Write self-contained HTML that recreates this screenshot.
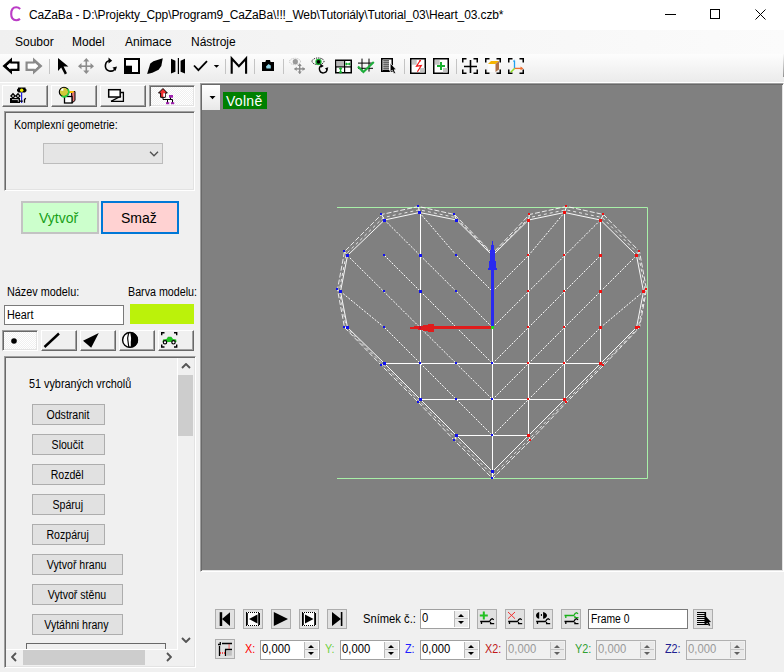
<!DOCTYPE html>
<html><head><meta charset="utf-8">
<style>
*{box-sizing:border-box;margin:0;padding:0}
html,body{width:784px;height:672px;overflow:hidden;background:#f0f0f0;font-family:"Liberation Sans",sans-serif;font-size:12px;color:#000}
.a{position:absolute}
.t{position:absolute;white-space:nowrap;line-height:1}
.s11{font-size:12.3px;transform:scaleX(0.88);transform-origin:0 0}
.raised{position:absolute;background:#f0f0f0;border-top:1px solid #fff;border-left:1px solid #fff;border-right:1px solid #696969;border-bottom:1px solid #696969;box-shadow:inset -1px -1px 0 #a0a0a0}
.sunken{position:absolute;border-top:1px solid #a0a0a0;border-left:1px solid #a0a0a0;border-right:1px solid #fff;border-bottom:1px solid #fff;box-shadow:inset 1px 1px 0 #696969,inset -1px -1px 0 #e3e3e3}
.dith{background-color:#fff;background-image:linear-gradient(45deg,#f0f0f0 25%,transparent 25%,transparent 75%,#f0f0f0 75%),linear-gradient(45deg,#f0f0f0 25%,transparent 25%,transparent 75%,#f0f0f0 75%);background-size:2px 2px;background-position:0 0,1px 1px}
.wbtn{position:absolute;background:#e1e1e1;border:1px solid #adadad}
.lbtn{position:absolute;background:#e1e1e1;border:1px solid #adadad;font-size:12.3px;text-align:center;line-height:21px;white-space:nowrap;padding-right:2px}
.lbtn span{display:inline-block;transform:scaleX(0.86)}
.inp{position:absolute;background:#fff;border:1px solid #7a7a7a}
.spin{position:absolute;background:#fff;border:1px solid #a0a0a0}
.spin .bt{position:absolute;right:1px;top:1px;width:14px;height:16px;background:#ececec;border-left:1px solid #b9b9b9}
.spin .bt:before{content:"";position:absolute;left:3px;top:3px;border-left:3px solid transparent;border-right:3px solid transparent;border-bottom:3px solid #000}
.spin .bt:after{content:"";position:absolute;left:3px;top:10px;border-left:3px solid transparent;border-right:3px solid transparent;border-top:3px solid #000}
.spin .mid{position:absolute;right:1px;top:8px;width:14px;height:1px;background:#c4c4c4}
.spin .v{position:absolute;left:1px;top:2px;font-size:12.5px;line-height:1;white-space:nowrap;transform:scaleX(0.9);transform-origin:0 0}
.dis{background:#f0f0f0;border-color:#b0b0b0}
.dis .v{color:#9a9a9a}
.dis .bt{background:#e9e9e9;border-left-color:#c8c8c8}
.dis .bt:before{border-bottom-color:#606060}
.dis .bt:after{border-top-color:#606060}
</style></head><body>
<!-- title bar -->
<div class="a" style="left:0;top:0;width:784px;height:30px;background:#fff"></div>
<svg class="a" style="left:0;top:0" width="30" height="30"><path d="M20.2,8.9 C19,7.8 17.8,7.3 16.2,7.3 C13,7.3 11.2,10.2 11.2,14.1 C11.2,18 13,20.3 16.2,20.3 C17.7,20.3 18.9,19.8 20,18.9" fill="none" stroke="#bb3cc6" stroke-width="2.1"/></svg>
<div class="t" style="left:29px;top:9px;font-size:12px;letter-spacing:-0.12px">CaZaBa - D:\Projekty_Cpp\Program9_CaZaBa\!!!_Web\Tutoriály\Tutorial_03\Heart_03.czb*</div>
<div class="a" style="left:665px;top:14px;width:11px;height:1px;background:#000"></div>
<div class="a" style="left:710px;top:9px;width:10px;height:10px;border:1px solid #000"></div>
<svg class="a" style="left:755px;top:9px" width="11" height="11"><path d="M0.5 0.5L10.5 10.5M10.5 0.5L0.5 10.5" stroke="#000" stroke-width="1"/></svg>
<!-- menu bar -->
<div class="a" style="left:0;top:30px;width:784px;height:24px;background:linear-gradient(to right,#f0f0f0,#fbfbfb)"></div>
<div class="t" style="left:15px;top:36px">Soubor</div>
<div class="t" style="left:72px;top:36px">Model</div>
<div class="t" style="left:125px;top:36px">Animace</div>
<div class="t" style="left:191px;top:36px">Nástroje</div>
<!-- toolbar -->
<div class="a" style="left:0;top:54px;width:784px;height:28px;background:linear-gradient(#fdfdfd,#ebebeb)"></div>
<div class="a" style="left:0;top:82px;width:784px;height:1px;background:#fff"></div>
<div class="a" style="left:783px;top:54px;width:1px;height:23px;background:linear-gradient(#f8f8f8,#909090)"></div>
<svg class="a" style="left:0;top:0" width="784" height="84">
<!-- back arrow -->
<path d="M2.5,66 L12,57.5 L12,61.5 L19.5,61.5 L19.5,71 L12,71 L12,74.5Z M6.8,66 L10.2,62.9 L10.2,63.8 L17.2,63.8 L17.2,68.6 L10.2,68.6 L10.2,69.3Z" fill="#000" fill-rule="evenodd"/>
<path d="M6.8,66 L10.2,62.9 L10.2,63.8 L17.2,63.8 L17.2,68.6 L10.2,68.6 L10.2,69.3Z" fill="#fff"/>
<!-- forward arrow gray -->
<path d="M42.5,66 L33,57.5 L33,61.5 L25.5,61.5 L25.5,71 L33,71 L33,74.5Z M38.2,66 L34.8,62.9 L34.8,63.8 L27.8,63.8 L27.8,68.6 L34.8,68.6 L34.8,69.3Z" fill="#8a8a8a" fill-rule="evenodd"/>
<path d="M38.2,66 L34.8,62.9 L34.8,63.8 L27.8,63.8 L27.8,68.6 L34.8,68.6 L34.8,69.3Z" fill="#fff"/>
<rect x="49" y="59" width="1" height="15" fill="#c4c4c4"/>
<!-- cursor -->
<path d="M58,58 L58,71 L61.2,67.6 L64.8,74.5 L67,73.3 L63.6,66.6 L68.4,66.4 Z" fill="#000"/>
<!-- move cross gray -->
<g fill="#8c8c8c">
<rect x="85.5" y="60" width="1.6" height="12"/><rect x="80" y="65.4" width="12" height="1.6"/>
<path d="M86.3,58 L83.2,61.5 L89.4,61.5Z M86.3,74 L83.2,70.5 L89.4,70.5Z M78,66.2 L81.5,63.1 L81.5,69.3Z M94,66.2 L90.5,63.1 L90.5,69.3Z"/>
</g>
<!-- rotate -->
<path d="M110.5,60.5 A5.3,5.3 0 1 0 115.5,68" fill="none" stroke="#000" stroke-width="1.6"/>
<path d="M108.5,57.5 L112.2,60.8 L108.5,63.5Z" fill="#000"/>
<path d="M112.5,67.5 L117,66.5 L115.5,71Z" fill="#000"/>
<!-- scale square -->
<rect x="125" y="59" width="14" height="14" fill="#fff" stroke="#000" stroke-width="2"/>
<rect x="124" y="65.7" width="8" height="8.3" fill="#000"/>
<!-- leaf -->
<path d="M147.1,73.9 L150.3,63.4 L153.4,61.3 L162.8,58.2 L161.3,66 L158.6,69.7 L152.4,72.8Z" fill="#000"/>
<!-- mirror -->
<path d="M171,58.7 L175.4,60.8 L175.4,71.8 L171,73.4Z M185,58.7 L180.6,60.8 L180.6,71.8 L185,73.4Z" fill="#000"/>
<rect x="177.8" y="58" width="1.2" height="16" fill="#000"/>
<!-- check -->
<path d="M194,65.5 L198.4,70.2 L207,61.1" fill="none" stroke="#000" stroke-width="1.8"/>
<path d="M213.8,65 L219.2,65 L216.5,67.8Z" fill="#000"/>
<rect x="225" y="59" width="1" height="15" fill="#c4c4c4"/>
<!-- M -->
<path d="M231.7,73.8 L231.7,58.5 L238.9,66.1 L246.1,58.5 L246.1,73.8" fill="none" stroke="#000" stroke-width="2.1" stroke-linejoin="miter"/>
<rect x="254" y="59" width="1" height="15" fill="#c4c4c4"/>
<!-- camera -->
<path d="M262,62 L265.4,62 L266,60 L270,60 L270.6,62 L274,62 L274,71 L262,71Z" fill="#000"/>
<path d="M266,66.5 L268.5,64 L270.8,65.5 L270.8,68.6 L266.5,68.6Z" fill="#8fd4e6"/>
<rect x="283" y="59" width="1" height="15" fill="#c4c4c4"/>
<!-- gray eye + move -->
<ellipse cx="295" cy="61.5" rx="5.5" ry="3.2" fill="none" stroke="#b8b8b8" stroke-width="1" stroke-dasharray="1 1"/>
<circle cx="295.3" cy="61.7" r="2.6" fill="#9a9a9a"/>
<g fill="#8c8c8c">
<rect x="299" y="64" width="1.4" height="9.5"/><rect x="294.5" y="68.2" width="10.4" height="1.4"/>
<path d="M299.7,63.5 L297.6,66 L301.8,66Z M299.7,74 L297.6,71.5 L301.8,71.5Z M294.2,68.9 L296.7,66.8 L296.7,71Z M305,68.9 L302.5,66.8 L302.5,71Z"/>
</g>
<!-- eye + rotate -->
<ellipse cx="318" cy="61.3" rx="6" ry="3.3" fill="none" stroke="#000" stroke-width="1" stroke-dasharray="1.2 1"/>
<circle cx="318.5" cy="61.8" r="2.5" fill="#000" stroke="#18b030" stroke-width="1.3"/>
<path d="M322,65.5 A3.8,3.8 0 1 0 327,69" fill="none" stroke="#000" stroke-width="1.4"/>
<path d="M320.5,63.8 L323.8,66 L320.8,67.8Z M325,68.3 L328.3,67.2 L327.2,70.8Z" fill="#000"/>
<!-- grid box -->
<rect x="335.75" y="60.25" width="15.5" height="12.5" fill="#fff" stroke="#000" stroke-width="1.5"/>
<rect x="336.5" y="61" width="7.5" height="5.5" fill="#b8b8b8"/>
<rect x="344" y="60.5" width="1.2" height="12" fill="#000"/>
<rect x="335.5" y="66.3" width="16" height="1.2" fill="#000"/>
<path d="M340.6,67.8 L340.6,73 M339.2,69.2 L340.6,67.8 L342,69.2 M339.2,71.6 L340.6,73 L342,71.6" stroke="#18b030" stroke-width="1.2" fill="none"/>
<path d="M345.8,64 L350,64 M347,62.8 L345.8,64 L347,65.2 M348.8,62.8 L350,64 L348.8,65.2" stroke="#18b030" stroke-width="1.2" fill="none"/>
<!-- hash + check -->
<g stroke="#000" stroke-width="1">
<path d="M362,58.6 L362,71.6 M369,58.6 L369,71.6 M358,63.1 L373,63.1 M358,68.3 L373,68.3"/>
</g>
<path d="M358,66.4 L363.4,72 L373.8,62" fill="none" stroke="#1eae3c" stroke-width="2.1"/>
<!-- document -->
<rect x="381.75" y="58.75" width="10.5" height="12.5" fill="#fff" stroke="#000" stroke-width="1.5"/>
<path d="M383.2,60.9 L389,60.9 M383.2,62.9 L389,62.9 M383.2,64.9 L389,64.9 M383.2,66.9 L389,66.9 M383.2,68.9 L389,68.9" stroke="#000" stroke-width="1"/>
<rect x="383" y="70" width="6" height="1.5" fill="#000"/>
<path d="M390.2,63 L390.2,71.8 L392.3,70.2 L393.8,73.8 L395.6,73.2 L394.2,69.8 L396.2,69.6Z" fill="#000" stroke="#fff" stroke-width="0.7"/>
<rect x="404" y="59" width="1" height="15" fill="#c4c4c4"/>
<!-- lightning box -->
<rect x="410.75" y="58.75" width="14.5" height="14.5" fill="#fff" stroke="#000" stroke-width="1.5"/>
<rect x="412" y="60" width="4.7" height="4.7" fill="#c4c4c4"/><rect x="420" y="68" width="4.7" height="4.5" fill="#c4c4c4"/>
<path d="M420.2,60.5 L416.5,66.2 L421.3,65.6 L417.4,71.8" fill="none" stroke="#f01818" stroke-width="1.2"/>
<circle cx="420.2" cy="60.6" r="0.9" fill="#f01818"/>
<!-- plus box -->
<rect x="433.75" y="58.75" width="14.5" height="14.5" fill="#fff" stroke="#000" stroke-width="1.5"/>
<rect x="435" y="60" width="4.7" height="4.7" fill="#c4c4c4"/><rect x="443" y="68" width="4.7" height="4.5" fill="#c4c4c4"/>
<rect x="440" y="62" width="2" height="8" fill="#18b030"/><rect x="437" y="65" width="8" height="2" fill="#18b030"/>
<rect x="456" y="59" width="1" height="15" fill="#c4c4c4"/>
<!-- bracket icons -->
<g fill="none" stroke="#000" stroke-width="1.5">
<path d="M462.75,62.5 L462.75,58.75 L466.5,58.75 M473.5,58.75 L477.25,58.75 L477.25,62.5 M477.25,69.5 L477.25,73.25 L473.5,73.25 M466.5,73.25 L462.75,73.25 L462.75,69.5"/>
<path d="M485.75,62.5 L485.75,58.75 L489.5,58.75 M496.5,58.75 L500.25,58.75 L500.25,62.5 M500.25,69.5 L500.25,73.25 L496.5,73.25 M489.5,73.25 L485.75,73.25 L485.75,69.5"/>
<path d="M508.75,62.5 L508.75,58.75 L512.5,58.75 M519.5,58.75 L523.25,58.75 L523.25,62.5 M523.25,69.5 L523.25,73.25 L519.5,73.25 M512.5,73.25 L508.75,73.25 L508.75,69.5"/>
</g>
<path d="M464,66.5 L477,66.5 M470.5,60 L470.5,73" stroke="#000" stroke-width="1.6"/>
<path d="M488,64 L491,61 L499,61 L495.5,64Z" fill="#f5b400"/>
<path d="M488,64 L495.5,64 L495.5,72 L488,72Z" fill="#fcfcfc"/>
<path d="M495.5,64 L499,61 L499,69.5 L495.5,72Z" fill="#b07048"/>
<path d="M514.5,60.5 L514.5,68.4" stroke="#20a0f0" stroke-width="1.3"/>
<path d="M513,61.5 L514.5,60.2" stroke="#20a0f0" stroke-width="1"/>
<path d="M514.5,68.4 L522,68.4" stroke="#f07030" stroke-width="1.3"/>
<path d="M520.5,66.5 L523.5,68.4 L520.5,70.3Z" fill="#f07030"/>
<path d="M514.5,68.4 L510.8,72.2" stroke="#90e020" stroke-width="1.5"/>
</svg>


<!-- left panel -->
<div class="raised" style="left:2px;top:85px;width:46px;height:22px"></div>
<div class="raised" style="left:51px;top:85px;width:46px;height:22px"></div>
<div class="raised" style="left:100px;top:85px;width:46px;height:22px"></div>
<div class="sunken dith" style="left:149px;top:85px;width:46px;height:22px"></div>

<div class="sunken" style="left:4px;top:111px;width:191px;height:80px"></div>
<div class="t s11" style="left:14px;top:119px;transform:scaleX(0.867)">Komplexní geometrie:</div>
<div class="a" style="left:43px;top:143px;width:120px;height:21px;background:#e5e5e5;border:1px solid #bcbcbc"></div>
<svg class="a" style="left:149px;top:151px" width="11" height="6"><path d="M1,0.8 L5,4.8 L9,0.8" fill="none" stroke="#505050" stroke-width="1.3"/></svg>

<div class="a" style="left:21px;top:201px;width:78px;height:33px;background:#ccffcc;border:2px solid #c3c3c3"></div>
<div class="t" style="left:39px;top:211px;font-size:14px;color:#18a018">Vytvoř</div>
<div class="a" style="left:101px;top:201px;width:78px;height:33px;background:#ffd2d2;border:2px solid #0078d7"></div>
<div class="t" style="left:121px;top:211px;font-size:14px">Smaž</div>

<div class="t s11" style="left:7px;top:286px">Název modelu:</div>
<div class="t s11" style="left:128px;top:286px;transform:scaleX(0.87)">Barva modelu:</div>
<div class="inp" style="left:4px;top:305px;width:120px;height:20px"></div>
<div class="t s11" style="left:7px;top:309px">Heart</div>
<div class="a" style="left:130px;top:304px;width:64px;height:20px;background:#bbf20a"></div>

<div class="sunken dith" style="left:2px;top:330px;width:36px;height:21px"></div>
<div class="raised" style="left:41px;top:330px;width:36px;height:21px"></div>
<div class="raised" style="left:80px;top:330px;width:36px;height:21px"></div>
<div class="raised" style="left:119px;top:330px;width:36px;height:21px"></div>
<div class="raised" style="left:158px;top:330px;width:36px;height:21px"></div>

<div class="sunken" style="left:4px;top:356px;width:192px;height:312px"></div>
<div class="t s11" style="left:29px;top:378px">51 vybraných vrcholů</div>
<div class="lbtn" style="left:32px;top:404px;width:73px;height:21px"><span>Odstranit</span></div>
<div class="lbtn" style="left:32px;top:434px;width:73px;height:21px"><span>Sloučit</span></div>
<div class="lbtn" style="left:32px;top:464px;width:73px;height:21px"><span>Rozděl</span></div>
<div class="lbtn" style="left:32px;top:494px;width:73px;height:21px"><span>Spáruj</span></div>
<div class="lbtn" style="left:32px;top:524px;width:73px;height:21px"><span>Rozpáruj</span></div>
<div class="lbtn" style="left:32px;top:554px;width:91px;height:21px"><span>Vytvoř hranu</span></div>
<div class="lbtn" style="left:32px;top:584px;width:91px;height:21px"><span>Vytvoř stěnu</span></div>
<div class="lbtn" style="left:32px;top:614px;width:91px;height:21px"><span>Vytáhni hrany</span></div>
<div class="a" style="left:26px;top:643px;width:140px;height:6px;border:1px solid #696969;border-bottom:none"></div>
<!-- vertical scrollbar -->
<div class="a" style="left:178px;top:358px;width:16px;height:291px;background:#f0f0f0"></div>
<div class="a" style="left:178px;top:375px;width:15px;height:61px;background:#cdcdcd"></div>
<svg class="a" style="left:181px;top:363px" width="10" height="6"><path d="M1,5 L5,1 L9,5" fill="none" stroke="#555" stroke-width="1.9"/></svg>
<svg class="a" style="left:181px;top:637px" width="10" height="6"><path d="M1,1 L5,5 L9,1" fill="none" stroke="#555" stroke-width="1.9"/></svg>
<!-- horizontal scrollbar -->
<div class="a" style="left:6px;top:649px;width:171px;height:16px;background:#f0f0f0"></div>
<div class="a" style="left:23px;top:650px;width:122px;height:15px;background:#cdcdcd"></div>
<svg class="a" style="left:11px;top:652px" width="6" height="10"><path d="M5,1 L1,5 L5,9" fill="none" stroke="#555" stroke-width="1.9"/></svg>
<svg class="a" style="left:166px;top:652px" width="6" height="10"><path d="M1,1 L5,5 L1,9" fill="none" stroke="#555" stroke-width="1.9"/></svg>
<div class="a" style="left:177px;top:358px;width:1px;height:292px;background:#fff"></div>
<div class="a" style="left:6px;top:649px;width:172px;height:1px;background:#fff"></div>
<svg class="a" style="left:0;top:0" width="200" height="360">
<!-- tab1: camera + light -->
<path d="M18,87.5 L25.5,87.5 L25.5,88.5 L26.5,89.5 L26.5,91 L25,92.5 L18.5,92.5 L17,91 L17,89.5 L18,88.5Z" fill="#000"/>
<circle cx="21.7" cy="90.2" r="1.7" fill="#f0f000"/>
<rect x="21" y="92.5" width="1.2" height="10.5" fill="#2020e0"/>
<path d="M10,98 L20,98 L20,103 L10,103Z" fill="#000"/>
<path d="M12,99.6 L18.3,99.6 L18.3,101.8" fill="none" stroke="#d8d8d8" stroke-width="0.9"/>
<path d="M10,96 L13,92.8 L16,96 L13,98.8Z M15,96 L18,92.8 L20.8,96 L18,98.8Z" fill="#000"/>
<path d="M11.8,96 L13,94.7 L14.2,96 L13,97.2Z M16.8,96 L18,94.7 L19.2,96 L18,97.2Z" fill="#d0d0d0"/>
<rect x="20" y="100.5" width="2.8" height="1.3" fill="#000"/>
<path d="M24.5,102.8 L24.5,99.5 L25.8,98.2" stroke="#000" stroke-width="1.3" fill="none"/>
<!-- tab2: sphere + cube -->
<path d="M71.5,91.5 L75,91.5 L75,100.5 L72,103Z" fill="#e87878" stroke="#000" stroke-width="1"/>
<path d="M68,93 L70,91 L74.5,91 L72.5,93Z" fill="#ffc000"/>
<rect x="64.5" y="96.5" width="7.5" height="6.5" fill="#fff" stroke="#000" stroke-width="1.3"/>
<circle cx="64" cy="91.9" r="4.7" fill="#d2c93a" stroke="#000" stroke-width="1.1"/>
<path d="M67.6,89 A4.7,4.7 0 0 1 61.5,96" fill="none" stroke="#28d040" stroke-width="1.6"/>
<path d="M60.5,90.5 A3.2,3.2 0 0 1 63.5,88.2 L63.2,90.8Z" fill="#fff"/>
<!-- tab3: windows -->
<path d="M111,101.3 L123.4,101.3 L123.4,92.5 L121,92.5" fill="none" stroke="#000" stroke-width="1.3"/>
<path d="M111,101.3 L121,96" stroke="#000" stroke-width="1.4"/>
<rect x="108.7" y="89.7" width="11.5" height="7.3" fill="#fff" stroke="#000" stroke-width="1.5"/>
<!-- tab4: red arrow + network -->
<path d="M163,88.5 L167.3,93 L165.3,93 L165.3,97.3 L160.6,97.3 L160.6,93 L158.5,93Z" fill="#f03030" stroke="#000" stroke-width="1"/>
<rect x="163.3" y="93.3" width="1.8" height="3.5" fill="#fff"/>
<path d="M163,97.3 L163,99.5 L172.5,99.5 L172.5,103 M167.5,99.5 L167.5,103 M170.5,97 L170.5,99.5" stroke="#000" stroke-width="1" fill="none"/>
<rect x="169" y="95" width="4" height="2.7" fill="#a020b0"/>
<rect x="166" y="102.2" width="3.2" height="2" fill="#a020b0"/>
<rect x="171" y="102.2" width="3.2" height="2" fill="#a020b0"/>
<!-- toggles -->
<circle cx="14" cy="341" r="2.8" fill="#000"/>
<path d="M44.5,347 L59,333.5" stroke="#000" stroke-width="2.4"/>
<path d="M83,340.7 L98.8,333 L91.2,347.7Z" fill="#000"/>
<circle cx="130" cy="339.9" r="7.4" fill="#fff" stroke="#000" stroke-width="1.4"/>
<path d="M130.5,332.2 A7.7,7.7 0 0 1 130.5,347.6 C131.2,345 130.4,342.5 131,340 C131.5,337 130.2,335 130.5,332.2Z" fill="#000"/>
<path d="M128.8,332.5 C128.2,335 127.2,337.5 127.9,340.5 C128.4,343 128.2,345 129,347.2" fill="none" stroke="#000" stroke-width="1.2"/>
<g fill="none" stroke="#000" stroke-width="1.4">
<path d="M161.7,335.3 L161.7,332.7 L164.5,332.7 M174,332.7 L176.7,332.7 L176.7,335.3 M176.7,344.5 L176.7,347 L174,347 M164.5,347 L161.7,347 L161.7,344.5"/>
</g>
<path d="M162.5,342 L163,339.5 L166.5,339 L168,336.8 L171.3,336.8 L173,339 L176.2,339.5 L176.5,342Z" fill="#20c020"/>
<circle cx="165" cy="342.3" r="1.7" fill="#fff" stroke="#000" stroke-width="1.2"/>
<circle cx="173.5" cy="342.3" r="1.7" fill="#fff" stroke="#000" stroke-width="1.2"/>
</svg>


<!-- viewport -->
<div class="sunken" style="left:200px;top:83px;width:584px;height:489px;background:#808080"></div>
<div class="a" style="left:202px;top:85px;width:18px;height:25px;background:linear-gradient(#fff,#e8e8e8)"></div>
<svg class="a" style="left:209px;top:96px" width="7" height="4"><path d="M0.5,0 L6.5,0 L3.5,3.2Z" fill="#000"/></svg>
<div class="a" style="left:223px;top:92px;width:44px;height:17px;background:#008000"></div>
<div class="t" style="left:226px;top:94px;font-size:14px;letter-spacing:0.3px;color:#fff">Volně</div>
<svg class="a" style="left:0;top:0" width="784" height="672">
<path d="M337,207.5 L647.5,207.5 L647.5,478.5 L337,478.5" fill="none" stroke="#a8f0a8" stroke-width="1"/>
<polygon points="492.5,253.5 454.5,214.5 418.5,206.5 381.5,214.5 344.5,251.5 337.5,289.5 344.5,327.5 381.5,365.5 418.5,402.5 454.5,440.5 492.5,478.5 530.5,440.5 566.5,402.5 603.5,365.5 639.5,327.5 646.5,289.5 639.5,251.5 603.5,214.5 566.5,206.5 529.5,214.5" fill="none" stroke="#fff" stroke-width="1" stroke-dasharray="5 2" opacity="0.85"/>
<polygon points="492.5,255.5 456.5,220.0 419.5,212.5 384.5,220.0 347.5,255.5 340.5,291.5 347.5,327.5 384.5,363.5 420.5,399.5 456.5,435.5 492.5,471.5 528.5,435.5 564.5,399.5 600.5,363.5 636.5,327.5 643.5,291.5 636.5,255.5 600.5,220.0 564.5,212.5 528.5,220.0" fill="none" stroke="#fff" stroke-width="1" opacity="0.95"/>
<polygon points="492.8,254.8 455.8,217.55 419.3,209.8 383.3,217.55 346.3,253.8 339.3,290.8 346.3,327.8 383.3,364.8 419.8,401.3 455.8,438.3 492.8,475.3 529.8,438.3 565.8,401.3 602.3,364.8 638.3,327.8 645.3,290.8 638.3,253.8 602.3,217.55 565.8,209.8 529.3,217.55" fill="none" stroke="#fff" stroke-width="1" stroke-dasharray="3 3" opacity="0.8"/>
<line x1="492.5" y1="255.5" x2="492.5" y2="253.5" stroke="#fff" stroke-width="1"/>
<line x1="456.5" y1="220.0" x2="454.5" y2="214.5" stroke="#fff" stroke-width="1"/>
<line x1="419.5" y1="212.5" x2="418.5" y2="206.5" stroke="#fff" stroke-width="1"/>
<line x1="384.5" y1="220.0" x2="381.5" y2="214.5" stroke="#fff" stroke-width="1"/>
<line x1="347.5" y1="255.5" x2="344.5" y2="251.5" stroke="#fff" stroke-width="1"/>
<line x1="340.5" y1="291.5" x2="337.5" y2="289.5" stroke="#fff" stroke-width="1"/>
<line x1="347.5" y1="327.5" x2="344.5" y2="327.5" stroke="#fff" stroke-width="1"/>
<line x1="384.5" y1="363.5" x2="381.5" y2="365.5" stroke="#fff" stroke-width="1"/>
<line x1="420.5" y1="399.5" x2="418.5" y2="402.5" stroke="#fff" stroke-width="1"/>
<line x1="456.5" y1="435.5" x2="454.5" y2="440.5" stroke="#fff" stroke-width="1"/>
<line x1="492.5" y1="471.5" x2="492.5" y2="478.5" stroke="#fff" stroke-width="1"/>
<line x1="528.5" y1="435.5" x2="530.5" y2="440.5" stroke="#fff" stroke-width="1"/>
<line x1="564.5" y1="399.5" x2="566.5" y2="402.5" stroke="#fff" stroke-width="1"/>
<line x1="600.5" y1="363.5" x2="603.5" y2="365.5" stroke="#fff" stroke-width="1"/>
<line x1="636.5" y1="327.5" x2="639.5" y2="327.5" stroke="#fff" stroke-width="1"/>
<line x1="643.5" y1="291.5" x2="646.5" y2="289.5" stroke="#fff" stroke-width="1"/>
<line x1="636.5" y1="255.5" x2="639.5" y2="251.5" stroke="#fff" stroke-width="1"/>
<line x1="600.5" y1="220.0" x2="603.5" y2="214.5" stroke="#fff" stroke-width="1"/>
<line x1="564.5" y1="212.5" x2="566.5" y2="206.5" stroke="#fff" stroke-width="1"/>
<line x1="528.5" y1="220.0" x2="529.5" y2="214.5" stroke="#fff" stroke-width="1"/>
<line x1="420.5" y1="212.5" x2="420.5" y2="399.5" stroke="#fff" stroke-width="1" shape-rendering="crispEdges"/>
<line x1="492.5" y1="255.5" x2="492.5" y2="471.5" stroke="#fff" stroke-width="1" shape-rendering="crispEdges"/>
<line x1="528.5" y1="220.0" x2="528.5" y2="435.5" stroke="#fff" stroke-width="1" shape-rendering="crispEdges"/>
<line x1="564.5" y1="212.5" x2="564.5" y2="399.5" stroke="#fff" stroke-width="1" shape-rendering="crispEdges"/>
<line x1="600.5" y1="220.0" x2="600.5" y2="363.5" stroke="#fff" stroke-width="1" shape-rendering="crispEdges"/>
<line x1="384.5" y1="363.5" x2="600.5" y2="363.5" stroke="#fff" stroke-width="1" shape-rendering="crispEdges"/>
<line x1="420.5" y1="399.5" x2="564.5" y2="399.5" stroke="#fff" stroke-width="1" shape-rendering="crispEdges"/>
<line x1="456.5" y1="435.5" x2="528.5" y2="435.5" stroke="#fff" stroke-width="1" shape-rendering="crispEdges"/>
<line x1="419.5" y1="212.5" x2="456.5" y2="255.5" stroke="#fff" stroke-width="1" stroke-dasharray="2 1.4" opacity="1"/>
<line x1="456.5" y1="255.5" x2="492.5" y2="291.5" stroke="#fff" stroke-width="1" stroke-dasharray="2 1.4" opacity="1"/>
<line x1="384.5" y1="220.0" x2="492.5" y2="327.5" stroke="#fff" stroke-width="1" stroke-dasharray="2 1.4" opacity="1"/>
<line x1="384.5" y1="255.5" x2="492.5" y2="363.5" stroke="#fff" stroke-width="1" stroke-dasharray="2 1.4" opacity="1"/>
<line x1="347.5" y1="255.5" x2="492.5" y2="399.5" stroke="#fff" stroke-width="1" stroke-dasharray="2 1.4" opacity="1"/>
<line x1="340.5" y1="291.5" x2="384.5" y2="327.5" stroke="#fff" stroke-width="1" stroke-dasharray="2 1.4" opacity="1"/>
<line x1="384.5" y1="327.5" x2="492.5" y2="435.5" stroke="#fff" stroke-width="1" stroke-dasharray="2 1.4" opacity="1"/>
<line x1="492.5" y1="291.5" x2="528.5" y2="255.5" stroke="#fff" stroke-width="1" stroke-dasharray="2 1.4" opacity="1"/>
<line x1="528.5" y1="255.5" x2="564.5" y2="212.5" stroke="#fff" stroke-width="1" stroke-dasharray="2 1.4" opacity="1"/>
<line x1="492.5" y1="327.5" x2="600.5" y2="220.0" stroke="#fff" stroke-width="1" stroke-dasharray="2 1.4" opacity="1"/>
<line x1="492.5" y1="363.5" x2="600.5" y2="255.5" stroke="#fff" stroke-width="1" stroke-dasharray="2 1.4" opacity="1"/>
<line x1="492.5" y1="399.5" x2="636.5" y2="255.5" stroke="#fff" stroke-width="1" stroke-dasharray="2 1.4" opacity="1"/>
<line x1="492.5" y1="435.5" x2="600.5" y2="327.5" stroke="#fff" stroke-width="1" stroke-dasharray="2 1.4" opacity="1"/>
<line x1="600.5" y1="327.5" x2="643.5" y2="291.5" stroke="#fff" stroke-width="1" stroke-dasharray="2 1.4" opacity="1"/>
<rect x="383" y="254" width="2" height="2" fill="#1010f0"/>
<rect x="419" y="254" width="3" height="3" fill="#1010f0"/>
<rect x="455" y="254" width="2" height="2" fill="#1010f0"/>
<rect x="383" y="290" width="2" height="2" fill="#1010f0"/>
<rect x="419" y="290" width="3" height="3" fill="#1010f0"/>
<rect x="455" y="290" width="2" height="2" fill="#1010f0"/>
<rect x="383" y="326" width="2" height="2" fill="#1010f0"/>
<rect x="419" y="326" width="3" height="3" fill="#1010f0"/>
<rect x="455" y="326" width="2" height="2" fill="#1010f0"/>
<rect x="383" y="362" width="2" height="2" fill="#1010f0"/>
<rect x="419" y="362" width="2" height="2" fill="#1010f0"/>
<rect x="455" y="362" width="2" height="2" fill="#1010f0"/>
<rect x="491" y="362" width="2" height="2" fill="#1010f0"/>
<rect x="419" y="398" width="2" height="2" fill="#1010f0"/>
<rect x="455" y="398" width="2" height="2" fill="#1010f0"/>
<rect x="491" y="398" width="2" height="2" fill="#1010f0"/>
<rect x="455" y="434" width="2" height="2" fill="#1010f0"/>
<rect x="491" y="434" width="2" height="2" fill="#1010f0"/>
<rect x="491" y="470" width="2" height="2" fill="#1010f0"/>
<rect x="491" y="477" width="2" height="2" fill="#1010f0"/>
<rect x="527" y="254" width="2" height="2" fill="#f01010"/>
<rect x="563" y="254" width="2" height="2" fill="#f01010"/>
<rect x="599" y="254" width="3" height="3" fill="#f01010"/>
<rect x="527" y="290" width="2" height="2" fill="#f01010"/>
<rect x="563" y="290" width="2" height="2" fill="#f01010"/>
<rect x="599" y="290" width="3" height="3" fill="#f01010"/>
<rect x="527" y="326" width="2" height="2" fill="#f01010"/>
<rect x="563" y="326" width="2" height="2" fill="#f01010"/>
<rect x="599" y="326" width="3" height="3" fill="#f01010"/>
<rect x="527" y="362" width="2" height="2" fill="#f01010"/>
<rect x="563" y="362" width="2" height="2" fill="#f01010"/>
<rect x="599" y="362" width="2" height="2" fill="#f01010"/>
<rect x="527" y="398" width="2" height="2" fill="#f01010"/>
<rect x="563" y="398" width="2" height="2" fill="#f01010"/>
<rect x="527" y="434" width="2" height="2" fill="#f01010"/>
<rect x="491" y="254" width="3" height="3" fill="#1010f0"/>
<rect x="455" y="219" width="3" height="3" fill="#1010f0"/>
<rect x="418" y="211" width="3" height="3" fill="#1010f0"/>
<rect x="383" y="219" width="3" height="3" fill="#1010f0"/>
<rect x="346" y="254" width="3" height="3" fill="#1010f0"/>
<rect x="339" y="290" width="3" height="3" fill="#1010f0"/>
<rect x="346" y="326" width="3" height="3" fill="#1010f0"/>
<rect x="383" y="362" width="3" height="3" fill="#1010f0"/>
<rect x="419" y="398" width="3" height="3" fill="#1010f0"/>
<rect x="455" y="434" width="3" height="3" fill="#1010f0"/>
<rect x="491" y="470" width="3" height="3" fill="#1010f0"/>
<rect x="527" y="434" width="3" height="3" fill="#f01010"/>
<rect x="563" y="398" width="3" height="3" fill="#f01010"/>
<rect x="599" y="362" width="3" height="3" fill="#f01010"/>
<rect x="635" y="326" width="3" height="3" fill="#f01010"/>
<rect x="642" y="290" width="3" height="3" fill="#f01010"/>
<rect x="635" y="254" width="3" height="3" fill="#f01010"/>
<rect x="599" y="219" width="3" height="3" fill="#f01010"/>
<rect x="563" y="211" width="3" height="3" fill="#f01010"/>
<rect x="527" y="219" width="3" height="3" fill="#f01010"/>
<rect x="491" y="252" width="2" height="2" fill="#1010f0"/>
<rect x="453" y="213" width="2" height="2" fill="#1010f0"/>
<rect x="417" y="205" width="2" height="2" fill="#1010f0"/>
<rect x="380" y="213" width="2" height="2" fill="#1010f0"/>
<rect x="343" y="250" width="2" height="2" fill="#1010f0"/>
<rect x="336" y="288" width="2" height="2" fill="#1010f0"/>
<rect x="343" y="326" width="2" height="2" fill="#1010f0"/>
<rect x="380" y="364" width="2" height="2" fill="#1010f0"/>
<rect x="417" y="401" width="2" height="2" fill="#1010f0"/>
<rect x="453" y="439" width="2" height="2" fill="#1010f0"/>
<rect x="491" y="477" width="2" height="2" fill="#1010f0"/>
<rect x="529" y="439" width="2" height="2" fill="#f01010"/>
<rect x="565" y="401" width="2" height="2" fill="#f01010"/>
<rect x="602" y="364" width="2" height="2" fill="#f01010"/>
<rect x="638" y="326" width="2" height="2" fill="#f01010"/>
<rect x="645" y="288" width="2" height="2" fill="#f01010"/>
<rect x="638" y="250" width="2" height="2" fill="#f01010"/>
<rect x="602" y="213" width="2" height="2" fill="#f01010"/>
<rect x="565" y="205" width="2" height="2" fill="#f01010"/>
<rect x="528" y="213" width="2" height="2" fill="#f01010"/>
<path d="M492,241 L493,241 L493,245 L494,245 L494,250 L495,250 L495,261 L496,261 L496,268 L497,268 L497,270 L494,270 L494,327 L491,327 L491,270 L488,270 L488,268 L489,268 L489,261 L490,261 L490,250 L491,250 L491,245 L492,245Z" fill="#2a2af0" shape-rendering="crispEdges"/>
<path d="M410,327 L414,327 L414,326 L423,326 L423,325 L428,325 L428,324 L434,324 L434,326 L492,326 L492,329 L434,329 L434,332 L428,332 L428,331 L423,331 L423,330 L418,330 L418,329 L410,329Z" fill="#e01c1c" shape-rendering="crispEdges"/>
<rect x="419" y="326" width="2" height="3" fill="#c0103a"/>
<rect x="491" y="326" width="3" height="3" fill="#20e020"/>
</svg>

<!-- bottom controls -->
<div class="wbtn" style="left:215px;top:609px;width:20px;height:20px"></div>
<div class="wbtn" style="left:243px;top:609px;width:20px;height:20px"></div>
<div class="wbtn" style="left:271px;top:609px;width:20px;height:20px"></div>
<div class="wbtn" style="left:299px;top:609px;width:20px;height:20px"></div>
<div class="wbtn" style="left:327px;top:609px;width:20px;height:20px"></div>
<div class="t s11" style="left:363px;top:613px;transform:scaleX(0.91)">Snímek č.:</div>
<div class="spin" style="left:420px;top:609px;width:50px;height:20px"><div class="v">0</div><div class="bt"></div><div class="mid"></div></div>
<div class="wbtn" style="left:477px;top:609px;width:20px;height:20px"></div>
<div class="wbtn" style="left:505px;top:609px;width:20px;height:20px"></div>
<div class="wbtn" style="left:533px;top:609px;width:20px;height:20px"></div>
<div class="wbtn" style="left:561px;top:609px;width:20px;height:20px"></div>
<div class="inp" style="left:588px;top:609px;width:100px;height:20px;border-color:#7a7a7a"></div>
<div class="t" style="left:591px;top:613px;font-size:12.3px;transform:scaleX(0.84);transform-origin:0 0">Frame 0</div>
<div class="wbtn" style="left:693px;top:609px;width:20px;height:20px"></div>

<div class="wbtn" style="left:215px;top:639px;width:20px;height:20px"></div>
<div class="t" style="left:245px;top:643px;font-size:12px;color:#ff0000;transform:scaleX(0.9);transform-origin:0 0">X:</div>
<div class="spin" style="left:260px;top:640px;width:60px;height:20px"><div class="v">0,000</div><div class="bt"></div><div class="mid"></div></div>
<div class="t" style="left:325px;top:643px;font-size:12px;color:#70d040;transform:scaleX(0.9);transform-origin:0 0">Y:</div>
<div class="spin" style="left:340px;top:640px;width:60px;height:20px"><div class="v">0,000</div><div class="bt"></div><div class="mid"></div></div>
<div class="t" style="left:405px;top:643px;font-size:12px;color:#2020ff;transform:scaleX(0.9);transform-origin:0 0">Z:</div>
<div class="spin" style="left:420px;top:640px;width:60px;height:20px"><div class="v">0,000</div><div class="bt"></div><div class="mid"></div></div>
<div class="t" style="left:485px;top:643px;font-size:12px;color:#c01818;transform:scaleX(0.9);transform-origin:0 0">X2:</div>
<div class="spin dis" style="left:506px;top:640px;width:60px;height:20px"><div class="v">0,000</div><div class="bt"></div><div class="mid"></div></div>
<div class="t" style="left:575px;top:643px;font-size:12px;color:#30a030;transform:scaleX(0.9);transform-origin:0 0">Y2:</div>
<div class="spin dis" style="left:596px;top:640px;width:60px;height:20px"><div class="v">0,000</div><div class="bt"></div><div class="mid"></div></div>
<div class="t" style="left:665px;top:643px;font-size:12px;color:#202090;transform:scaleX(0.9);transform-origin:0 0">Z2:</div>
<div class="spin dis" style="left:686px;top:640px;width:60px;height:20px"><div class="v">0,000</div><div class="bt"></div><div class="mid"></div></div>
<svg class="a" style="left:200px;top:600px" width="584" height="72">
<g transform="translate(-200,-600)">
<!-- first -->
<rect x="219.7" y="612.2" width="2.5" height="13.8" fill="#000"/>
<path d="M222,619.1 L230,612.2 L230,626Z" fill="#000"/>
<!-- prev: film frame -->
<g>
<rect x="246" y="612" width="14" height="14" fill="#fff"/>
<path d="M246,612.5 L260,612.5 M246,625.5 L260,625.5" stroke="#000" stroke-width="1" stroke-dasharray="1 1"/>
<rect x="246" y="613" width="1.8" height="12" fill="#000"/><rect x="258.2" y="613" width="1.8" height="12" fill="#000"/>
<path d="M249,619 L257.5,614.5 L257.5,623.5Z" fill="#000"/>
</g>
<!-- play -->
<path d="M273.8,612 L288,619 L273.8,626Z" fill="#000"/>
<!-- next: film frame -->
<g>
<rect x="302" y="612" width="14" height="14" fill="#fff"/>
<path d="M302,612.5 L316,612.5 M302,625.5 L316,625.5" stroke="#000" stroke-width="1" stroke-dasharray="1 1"/>
<rect x="302" y="613" width="1.8" height="12" fill="#000"/><rect x="314.2" y="613" width="1.8" height="12" fill="#000"/>
<path d="M305,614.5 L313.5,619 L305,623.5Z" fill="#000"/>
</g>
<!-- last -->
<path d="M332,612 L341,619 L332,626Z" fill="#000"/>
<rect x="340.8" y="612" width="1.6" height="14" fill="#000"/>
<!-- keyframe btns -->
<rect x="482.8" y="611.5" width="2" height="8" fill="#20c020"/><rect x="479.8" y="614.5" width="8" height="2" fill="#20c020"/>
<path d="M480.2,621.5 L489.8,621.5 M481.5,621.5 L481.5,623.9 M489.59999999999997,621.5 L490.8,619.5 L492.2,618.7 L493.8,619.7 M490.59999999999997,622.1 L490.59999999999997,623.6 L494.2,623.6" fill="none" stroke="#000" stroke-width="1.3"/>
<path d="M508,612 L515,618.7 M515,612 L508,618.7" stroke="#f03030" stroke-width="1"/>
<path d="M508.2,621.5 L517.8,621.5 M509.5,621.5 L509.5,623.9 M517.6,621.5 L518.8,619.5 L520.2,618.7 L521.8,619.7 M518.6,622.1 L518.6,623.6 L522.2,623.6" fill="none" stroke="#000" stroke-width="1.3"/>
<path d="M539.2,612 L539.2,618.8 C537.5,618.5 536,617 536,615.4 C536,613.8 537.5,612.3 539.2,612Z M543.1,612 L543.1,618.8 C545,618.5 547,617 547,615.4 C547,613.8 545,612.3 543.1,612Z" fill="#000"/>
<rect x="540.9" y="614" width="1" height="2" fill="#000"/>
<path d="M536.2,621.5 L545.8000000000001,621.5 M537.5,621.5 L537.5,623.9 M545.6,621.5 L546.8000000000001,619.5 L548.2,618.7 L549.8000000000001,619.7 M546.6,622.1 L546.6,623.6 L550.2,623.6" fill="none" stroke="#000" stroke-width="1.3"/>
<path d="M564.5,615.5 L574.1,615.5 M565.8,615.5 L565.8,617.9 M573.9,615.5 L575.1,613.5 L576.5,612.7 L578.1,613.7 M574.9,616.1 L574.9,617.6 L578.5,617.6" fill="none" stroke="#18b018" stroke-width="1.3"/>
<path d="M564.5,621.5 L574.1,621.5 M565.8,621.5 L565.8,623.9 M573.9,621.5 L575.1,619.5 L576.5,618.7 L578.1,619.7 M574.9,622.1 L574.9,623.6 L578.5,623.6" fill="none" stroke="#000" stroke-width="1.3"/>
<!-- doc w/ arrow -->
<path d="M697,612.5 L705,612.5 M697,614.5 L705,614.5 M697,616.5 L705,616.5 M697,618.5 L705,618.5 M697,620.5 L705,620.5 M697,622.5 L706,622.5 M697,624.5 L708,624.5" stroke="#000" stroke-width="1"/>
<rect x="704.5" y="612" width="1.6" height="12" fill="#000"/>
<path d="M705.5,616 L705.5,624.5 L707.3,622.8 L709,626 L710.3,625.3 L708.8,622.3 L711,622Z" fill="#000"/>
<!-- keyframe icon row2 -->
<path d="M220.3,642 L220.3,645 M218,644.5 L220.8,644.5 M222,643.5 L232,643.5 M219.5,646 L219.5,656 M225,649.5 L232,649.5 M225.5,649.5 L225.5,656" stroke="#000" stroke-width="1.3" fill="none"/>
<path d="M229.1,644.5 L229.1,649" stroke="#f02020" stroke-width="1.3" stroke-dasharray="1 1"/>
<path d="M220,653 L225,653" stroke="#f02020" stroke-width="1.3" stroke-dasharray="1 1"/>
<rect x="227" y="650.7" width="4.8" height="5" fill="#c0c0c0"/>
</g>
</svg>

</body></html>
